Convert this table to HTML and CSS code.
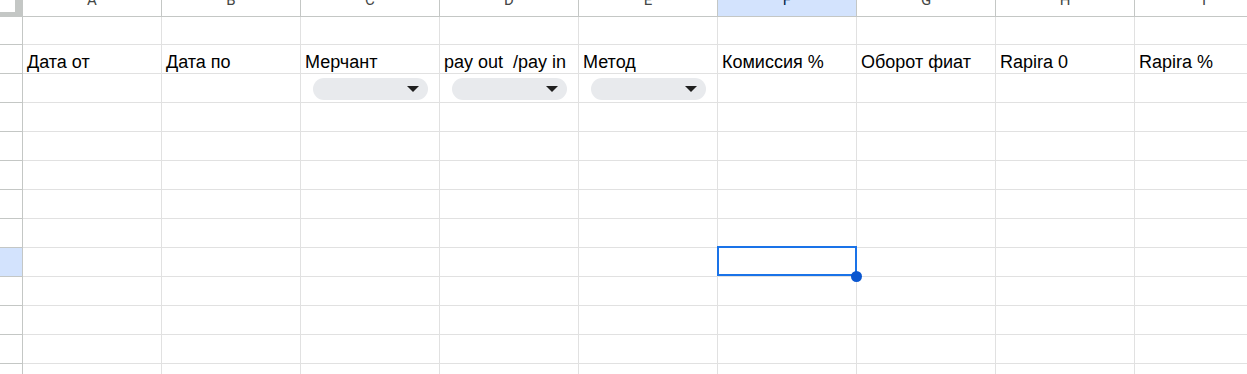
FILE: index.html
```html
<!DOCTYPE html>
<html lang="en">
<head>
    <meta charset="UTF-8">
    <title>Отчёт по мерчантам</title>
    <link rel="stylesheet" href="styles.css">
</head>
<body>

    <div class="sheet">
        <!-- column headers -->
        <div class="corner"></div>
        <div class="col-head"><span>A</span></div>
        <div class="col-head"><span>B</span></div>
        <div class="col-head"><span>C</span></div>
        <div class="col-head"><span>D</span></div>
        <div class="col-head"><span>E</span></div>
        <div class="col-head current"><span>F</span></div>
        <div class="col-head"><span>G</span></div>
        <div class="col-head"><span>H</span></div>
        <div class="col-head"><span>I</span></div>

        <!-- 1 -->
        <div class="row-head"></div>
        <div class="cell"></div><div class="cell"></div><div class="cell"></div><div class="cell"></div><div class="cell"></div>
        <div class="cell"></div><div class="cell"></div><div class="cell"></div><div class="cell"></div>

        <!-- 2: titles -->
        <div class="row-head"></div>
        <div class="cell text">Дата от</div>
        <div class="cell text">Дата по</div>
        <div class="cell text">Мерчант</div>
        <div class="cell text">pay out  /pay in</div>
        <div class="cell text">Метод</div>
        <div class="cell text">Комиссия %</div>
        <div class="cell text">Оборот фиат</div>
        <div class="cell text">Rapira 0</div>
        <div class="cell text">Rapira %</div>

        <!-- 3: filters -->
        <div class="row-head"></div>
        <div class="cell"></div>
        <div class="cell"></div>
        <div class="cell pick"><div class="chip"><i class="arrow"></i></div></div>
        <div class="cell pick"><div class="chip"><i class="arrow"></i></div></div>
        <div class="cell pick"><div class="chip"><i class="arrow"></i></div></div>
        <div class="cell"></div><div class="cell"></div><div class="cell"></div><div class="cell"></div>

        <!-- 4 -->
        <div class="row-head"></div>
        <div class="cell"></div><div class="cell"></div><div class="cell"></div><div class="cell"></div><div class="cell"></div>
        <div class="cell"></div><div class="cell"></div><div class="cell"></div><div class="cell"></div>

        <!-- 5 -->
        <div class="row-head"></div>
        <div class="cell"></div><div class="cell"></div><div class="cell"></div><div class="cell"></div><div class="cell"></div>
        <div class="cell"></div><div class="cell"></div><div class="cell"></div><div class="cell"></div>

        <!-- 6 -->
        <div class="row-head"></div>
        <div class="cell"></div><div class="cell"></div><div class="cell"></div><div class="cell"></div><div class="cell"></div>
        <div class="cell"></div><div class="cell"></div><div class="cell"></div><div class="cell"></div>

        <!-- 7 -->
        <div class="row-head"></div>
        <div class="cell"></div><div class="cell"></div><div class="cell"></div><div class="cell"></div><div class="cell"></div>
        <div class="cell"></div><div class="cell"></div><div class="cell"></div><div class="cell"></div>

        <!-- 8 -->
        <div class="row-head"></div>
        <div class="cell"></div><div class="cell"></div><div class="cell"></div><div class="cell"></div><div class="cell"></div>
        <div class="cell"></div><div class="cell"></div><div class="cell"></div><div class="cell"></div>

        <!-- 9: active cell in F -->
        <div class="row-head current"></div>
        <div class="cell"></div><div class="cell"></div><div class="cell"></div><div class="cell"></div><div class="cell"></div>
        <div class="cell active"><span class="handle"></span></div>
        <div class="cell"></div><div class="cell"></div><div class="cell"></div>

        <!-- 10 -->
        <div class="row-head"></div>
        <div class="cell"></div><div class="cell"></div><div class="cell"></div><div class="cell"></div><div class="cell"></div>
        <div class="cell"></div><div class="cell"></div><div class="cell"></div><div class="cell"></div>

        <!-- 11 -->
        <div class="row-head"></div>
        <div class="cell"></div><div class="cell"></div><div class="cell"></div><div class="cell"></div><div class="cell"></div>
        <div class="cell"></div><div class="cell"></div><div class="cell"></div><div class="cell"></div>

        <!-- 12 -->
        <div class="row-head"></div>
        <div class="cell"></div><div class="cell"></div><div class="cell"></div><div class="cell"></div><div class="cell"></div>
        <div class="cell"></div><div class="cell"></div><div class="cell"></div><div class="cell"></div>

        <!-- 13 -->
        <div class="row-head"></div>
        <div class="cell"></div><div class="cell"></div><div class="cell"></div><div class="cell"></div><div class="cell"></div>
        <div class="cell"></div><div class="cell"></div><div class="cell"></div><div class="cell"></div>
    </div>

</body>
</html>
```

FILE: styles.css
```css
/* Spreadsheet grid */
body {
    margin: 0;
    background: #fff;
    font-family: "Liberation Sans", Arial, sans-serif;
    color: #000;
    overflow: hidden;
}

.sheet {
    display: grid;
    grid-template-columns: 23px repeat(9, 139px);
    grid-template-rows: 17px 28px repeat(12, 29px);
    width: max-content;
}

.sheet > div {
    box-sizing: border-box;
}

/* top-left corner with the freeze bars */
.corner {
    border-right: 8px solid #c4c7c5;
    border-bottom: 5px solid #c4c7c5;
}

.col-head {
    display: flex;
    justify-content: center;
    overflow: hidden;
    border-right: 1px solid #c4c7c5;
    border-bottom: 1px solid #c4c7c5;
    font-family: Roboto, "Liberation Sans", sans-serif;
    font-size: 15px;
    color: #444746;
}

.col-head span {
    line-height: 16px;
    margin-top: -8px;
}

.col-head.current {
    background: #d3e3fd;
    color: #041e49;
}

.row-head {
    border-right: 1px solid #c4c7c5;
    border-bottom: 1px solid #c4c7c5;
}

.row-head.current {
    background: #d3e3fd;
}

.cell {
    border-right: 1px solid #e1e1e1;
    border-bottom: 1px solid #e1e1e1;
}

.cell.text {
    display: flex;
    align-items: flex-end;
    padding: 0 4px 1px;
    font-size: 18px;
    line-height: 20px;
    white-space: pre;
}

/* dropdown chips */
.cell.pick {
    padding: 4px 11px 0 12px;
}

.chip {
    height: 22px;
    border-radius: 11px;
    background: #e8eaed;
    display: flex;
    align-items: center;
    justify-content: flex-end;
    padding-right: 9px;
}

.arrow {
    width: 0;
    height: 0;
    border-left: 6px solid transparent;
    border-right: 6px solid transparent;
    border-top: 6px solid #1f1f1f;
}

/* active cell */
.cell.active {
    position: relative;
    z-index: 1;
}

.cell.active::after {
    content: "";
    position: absolute;
    top: -2px;
    left: -1px;
    width: 140px;
    height: 30px;
    box-sizing: border-box;
    border: 2px solid #1a73e8;
}

.handle {
    position: absolute;
    right: -6px;
    bottom: -6px;
    width: 11px;
    height: 11px;
    border-radius: 50%;
    background: #0b57d0;
    z-index: 2;
}
```
